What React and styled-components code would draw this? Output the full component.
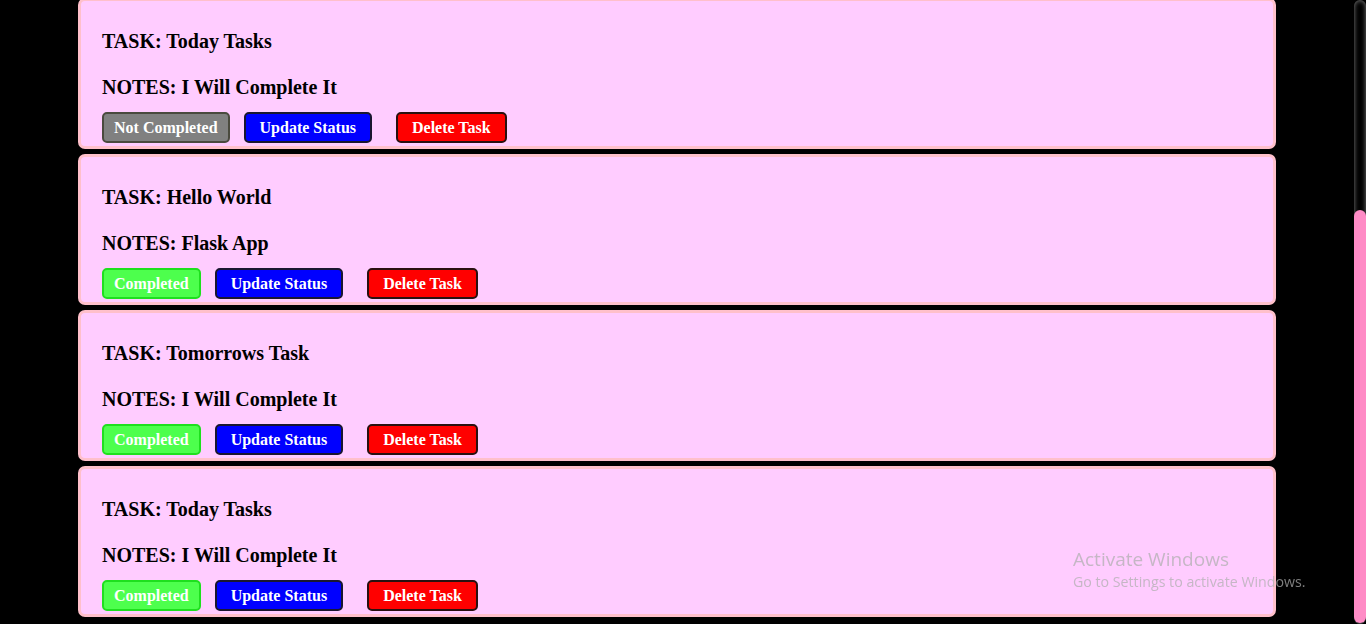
import React from "react";
import styled, { createGlobalStyle } from "styled-components";

const GlobalStyle = createGlobalStyle`
  html, body {
    margin: 0;
    padding: 0;
    background: #000;
    overflow: hidden;
    font-family: "Liberation Serif", "Times New Roman", serif;
  }
`;

const Page = styled.div`
  display: flex;
  height: 624px;
  overflow: hidden;
  background: #000;
`;

const TaskList = styled.main`
  flex: 1;
  display: flex;
  flex-direction: column;
  gap: 5px;
  margin-top: -2px;
`;

const ScrollRail = styled.div`
  box-sizing: border-box;
  width: 12px;
  height: 624px;
  padding: 210px 0 1px;
  display: flex;
  flex-direction: column;
  background: #000;
  box-shadow: inset 0 0 5px grey;
  border-radius: 10px;
`;

const ScrollThumb = styled.div`
  flex: 1;
  background: #ff8cc6;
  border-radius: 10px;
`;

const Card = styled.section`
  box-sizing: border-box;
  flex: none;
  width: 1198px;
  height: 151px;
  margin: 0 auto;
  padding: 29px 21px 4px;
  background: #ffccff;
  border: 3px solid #ffc0cb;
  border-radius: 7px;
  display: flex;
  flex-direction: column;
`;

const Line = styled.h3`
  margin: 0 0 ${(p) => p.$gap}px;
  font-family: "Liberation Serif", "Times New Roman", serif;
  font-size: 20px;
  line-height: 23px;
  font-weight: bold;
  color: #000;
`;

const Actions = styled.div`
  display: flex;
  align-items: center;
`;

const Button = styled.button`
  box-sizing: border-box;
  height: 31px;
  margin-right: ${(p) => p.$after}px;
  padding: 0 ${(p) => p.$pad}px;
  font-family: "Liberation Serif", "Times New Roman", serif;
  font-size: 16px;
  font-weight: bold;
  color: #fff;
  background: ${(p) => p.$bg};
  border: 2px solid ${(p) => p.$border};
  border-radius: 5px;
  cursor: pointer;
`;

const Watermark = styled.div`
  position: fixed;
  left: 1073px;
  top: 547px;
  font-family: "Open Sans", "Noto Sans", sans-serif;
  color: rgba(175, 175, 175, 0.72);
  pointer-events: none;
`;

const WatermarkTitle = styled.div`
  font-size: 19px;
  line-height: 25px;
`;

const WatermarkSub = styled.div`
  font-size: 14.2px;
  line-height: 20px;
`;

const tasks = [
  { task: "Today Tasks", notes: "I Will Complete It", done: false },
  { task: "Hello World", notes: "Flask App", done: true },
  { task: "Tomorrows Task", notes: "I Will Complete It", done: true },
  { task: "Today Tasks", notes: "I Will Complete It", done: true },
];

export default function App() {
  return (
    <>
      <GlobalStyle />
      <Page>
        <TaskList>
          {tasks.map((t, i) => (
            <Card key={i}>
              <Line $gap={23}>TASK: {t.task}</Line>
              <Line $gap={13}>NOTES: {t.notes}</Line>
              <Actions>
                {t.done ? (
                  <Button $bg="#4dff4d" $border="#1ee01e" $pad={10} $after={14}>
                    Completed
                  </Button>
                ) : (
                  <Button $bg="#808080" $border="#4a4a3e" $pad={10} $after={14}>
                    Not Completed
                  </Button>
                )}
                <Button $bg="#0000ff" $border="#1a1630" $pad={14} $after={24}>
                  Update Status
                </Button>
                <Button $bg="#ff0000" $border="#2a1010" $pad={14} $after={0}>
                  Delete Task
                </Button>
              </Actions>
            </Card>
          ))}
        </TaskList>
        <ScrollRail>
          <ScrollThumb />
        </ScrollRail>
      </Page>
      <Watermark>
        <WatermarkTitle>Activate Windows</WatermarkTitle>
        <WatermarkSub>Go to Settings to activate Windows.</WatermarkSub>
      </Watermark>
    </>
  );
}
